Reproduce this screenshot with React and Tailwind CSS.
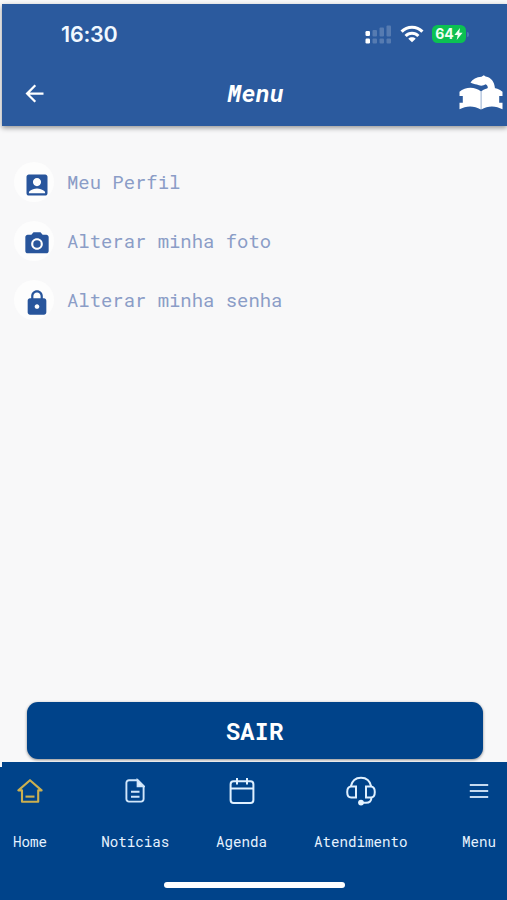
import React from "react";
import { MdAccountBox, MdArrowBack, MdCameraAlt, MdLock } from "react-icons/md";

const MENU_ITEMS = [
  { label: "Meu Perfil", icon: MdAccountBox },
  { label: "Alterar minha foto", icon: MdCameraAlt },
  { label: "Alterar minha senha", icon: MdLock },
];

function SignalIcon() {
  return (
    <svg width="27" height="19" viewBox="0 0 27 19" fill="#fff">
      <rect x="0.5" y="6" width="4.5" height="5" rx="1.2" />
      <rect x="0.5" y="13.5" width="4.5" height="5" rx="1.2" />
      <g opacity="0.2">
        <rect x="7.5" y="5" width="4.5" height="6.5" rx="1" />
        <rect x="14.5" y="2.5" width="4.5" height="9" rx="1" />
        <rect x="21.5" y="0.5" width="4.5" height="11" rx="1" />
        <rect x="7.5" y="13.5" width="4.5" height="5" rx="1" />
        <rect x="14.5" y="13.5" width="4.5" height="5" rx="1" />
        <rect x="21.5" y="13.5" width="4.5" height="5" rx="1" />
      </g>
    </svg>
  );
}

function WifiIcon() {
  return (
    <svg width="24" height="18" viewBox="0 0 24 18" fill="none" stroke="#fff" strokeWidth="3.1">
      <path d="M1.6 6.6C7.4 0.7 16.6 0.7 22.4 6.6" />
      <path d="M5.6 11C9.2 7.4 14.8 7.4 18.4 11" />
      <path d="M12 17.3l-3.7-3.6c2.1-1.8 5.3-1.8 7.4 0z" fill="#fff" stroke="none" />
    </svg>
  );
}

function Battery() {
  return (
    <div className="flex items-center gap-px">
      <div className="flex h-[18px] w-[34px] items-center justify-center rounded-[5.5px] bg-[#0cc152]">
        <span className="font-['Inter'] text-[14px] leading-none font-bold text-[#effff2]">64</span>
        <svg width="9" height="12" viewBox="0 0 9 12" fill="#effff2">
          <path d="M6 0L0.4 7h3.3L2.7 12 8.6 4.8H5.2z" />
        </svg>
      </div>
      <div className="h-[5px] w-[2px] rounded-r-full bg-[#4a79b5]" />
    </div>
  );
}

// Open book with a curved figure resting on top
function BookLogo() {
  return (
    <svg width="44" height="36" viewBox="0 0 44 36" fill="#fff">
      <path d="M11.5 7.4C13.5 4 17.5 1.9 22.5 1.7L24.8 0.2L26.6 1.6C32.2 2.7 35.4 6.6 36 13.5L27.8 14.8C29.6 13 29 10.8 26.8 9.3C24 11.2 20.6 11 17.8 9.6C15.6 9 13.3 8.6 11.5 7.4z" />
      <path d="M0.5 16.8C6.5 11.4 16 11.6 21.8 16.2V34.5C15 30.3 7 30.5 0.5 34.3V27.8H3.8V21H0.5z" />
      <path d="M43.5 16.8C37.5 11.4 28 11.6 22.3 16.2V34.5C29 30.3 37 30.5 43.5 34.3V27.8H40.2V21H43.5z" />
    </svg>
  );
}

function HomeIcon() {
  return (
    <svg width="26" height="26" viewBox="0 0 26 26" fill="none" stroke="#ccb04f" strokeWidth="2.1">
      <path d="M1.4 12.4H5V23.8H21.2V12.4H24.6L13 2.2z" strokeLinejoin="round" />
      <path d="M5 13.5V11M21.2 13.5V11" stroke="#00438a" strokeWidth="0" />
      <path d="M8.5 18.6h9" />
    </svg>
  );
}

function NewsIcon() {
  return (
    <svg width="20" height="26" viewBox="0 0 20 26" fill="none" stroke="#d0e6fb" strokeWidth="1.9">
      <path d="M12.6 2.2H4A2.6 2.6 0 0 0 1.4 4.8v16A2.6 2.6 0 0 0 4 23.6h12a2.6 2.6 0 0 0 2.6-2.8V8.2z" />
      <path d="M12.6 2.2v6h6z" fill="#e6f4ff" />
      <path d="M6 13.8h8.5M6 18.8h8.5" />
    </svg>
  );
}

function AgendaIcon() {
  return (
    <svg width="26" height="28" viewBox="0 0 26 28" fill="none" stroke="#dff0ff" strokeWidth="2">
      <rect x="1.6" y="4.2" width="22.8" height="21.8" rx="3" />
      <path d="M1.6 11.6h22.8M8 1v6.5M18 1v6.5" />
    </svg>
  );
}

function SupportIcon() {
  return (
    <svg width="30" height="30" viewBox="0 0 30 30" fill="none" stroke="#dff0ff" strokeWidth="2">
      <path d="M4.8 10.5C6 4.6 9.8 1.7 15 1.7S24 4.6 25.2 10.5" />
      <path d="M10 10.5H5.2C2.5 10.5 1.2 12.6 1.2 16s1.3 5.5 4 5.5H10z" />
      <path d="M20 10.5h4.8c2.7 0 4 2.1 4 5.5s-1.3 5.5-4 5.5H20z" />
      <path d="M25.4 21.5c0 3.5-2.4 5.3-5.4 5.3h-4" />
      <circle cx="15" cy="26.6" r="2.9" fill="#e6f4ff" stroke="none" />
    </svg>
  );
}

function LinesIcon() {
  return (
    <svg width="20" height="18" viewBox="0 0 20 18" stroke="#c5daf0" strokeWidth="2">
      <path d="M0.8 2.9h18.4M0.8 8.9h18.4M0.8 14.9h18.4" />
    </svg>
  );
}

function NavItem({ label, width, children }) {
  return (
    <div className={`flex flex-col items-center ${width}`}>
      <div className="flex h-[30px] items-center justify-center">{children}</div>
      <span className="mt-[27px] text-[14.2px] leading-[18px] whitespace-nowrap text-[#e6f2ff]">{label}</span>
    </div>
  );
}

export default function App() {
  return (
    <div className="flex h-[900px] w-[507px] flex-col overflow-hidden bg-[#f8f8f9] pt-1 font-['Roboto_Mono','Liberation_Mono',monospace]">
      <header className="ml-[2px] h-[122px] shrink-0 bg-[#2b5a9e] shadow-[0_2px_5px_rgba(0,0,0,0.4)]">
        <div className="flex h-[60px] items-center justify-between pr-[38px] pl-[59px]">
          <span className="font-['Inter'] text-[21.5px] font-semibold tracking-[-0.2px] text-[#f1f8ff]">16:30</span>
          <div className="flex items-center">
            <SignalIcon />
            <div className="mr-[8px] ml-[8px]">
              <WifiIcon />
            </div>
            <Battery />
          </div>
        </div>
        <div className="grid h-[58px] grid-cols-[60px_1fr_54px] items-center pr-1">
          <MdArrowBack className="ml-[19px] size-[27px] text-white" />
          <h1 className="text-center text-[24px] font-bold text-white italic">Menu</h1>
          <div className="flex justify-end">
            <BookLogo />
          </div>
        </div>
      </header>

      <main className="flex flex-1 flex-col">
        <ul className="mt-[36px] flex flex-col gap-[19px] pl-[14px]">
          {MENU_ITEMS.map(({ label, icon: Icon }) => (
            <li key={label} className="flex h-10 items-center">
              <span className="flex size-10 items-center justify-center rounded-full bg-[#fdfdfd]">
                <Icon className="mt-[5px] ml-[6px] size-7 shrink-0 text-[#28559c]" />
              </span>
              <span className="ml-[13px] pt-px text-[18.9px] text-[#8b9dc7]">{label}</span>
            </li>
          ))}
        </ul>
        <button className="mx-auto mt-auto mb-[3px] h-[57px] w-[456px] translate-x-[1px] rounded-[11px] bg-[#00438a] text-[24px] font-bold text-white shadow-[0_1px_3px_rgba(0,0,0,0.45)]">
          SAIR
        </button>
      </main>

      <nav className="relative flex h-[138px] shrink-0 flex-col bg-[#00438a]">
        {/* light notch where the page edge overlaps the bar */}
        <span className="absolute top-0 left-0 h-[5px] w-[2px] bg-[#f8f8f9]" />
        <div className="flex justify-between pt-[14px] pr-[3px] pl-[5px]">
          <NavItem label="Home" width="w-[50px]">
            <HomeIcon />
          </NavItem>
          <NavItem label="Notícias" width="w-[69px]">
            <NewsIcon />
          </NavItem>
          <NavItem label="Agenda" width="w-[52px]">
            <AgendaIcon />
          </NavItem>
          <NavItem label="Atendimento" width="w-[95px]">
            <SupportIcon />
          </NavItem>
          <NavItem label="Menu" width="w-[50px]">
            <LinesIcon />
          </NavItem>
        </div>
        <div className="mx-auto mt-auto mb-[12px] h-[6px] w-[181px] translate-x-[1px] rounded-full bg-white" />
      </nav>
    </div>
  );
}
